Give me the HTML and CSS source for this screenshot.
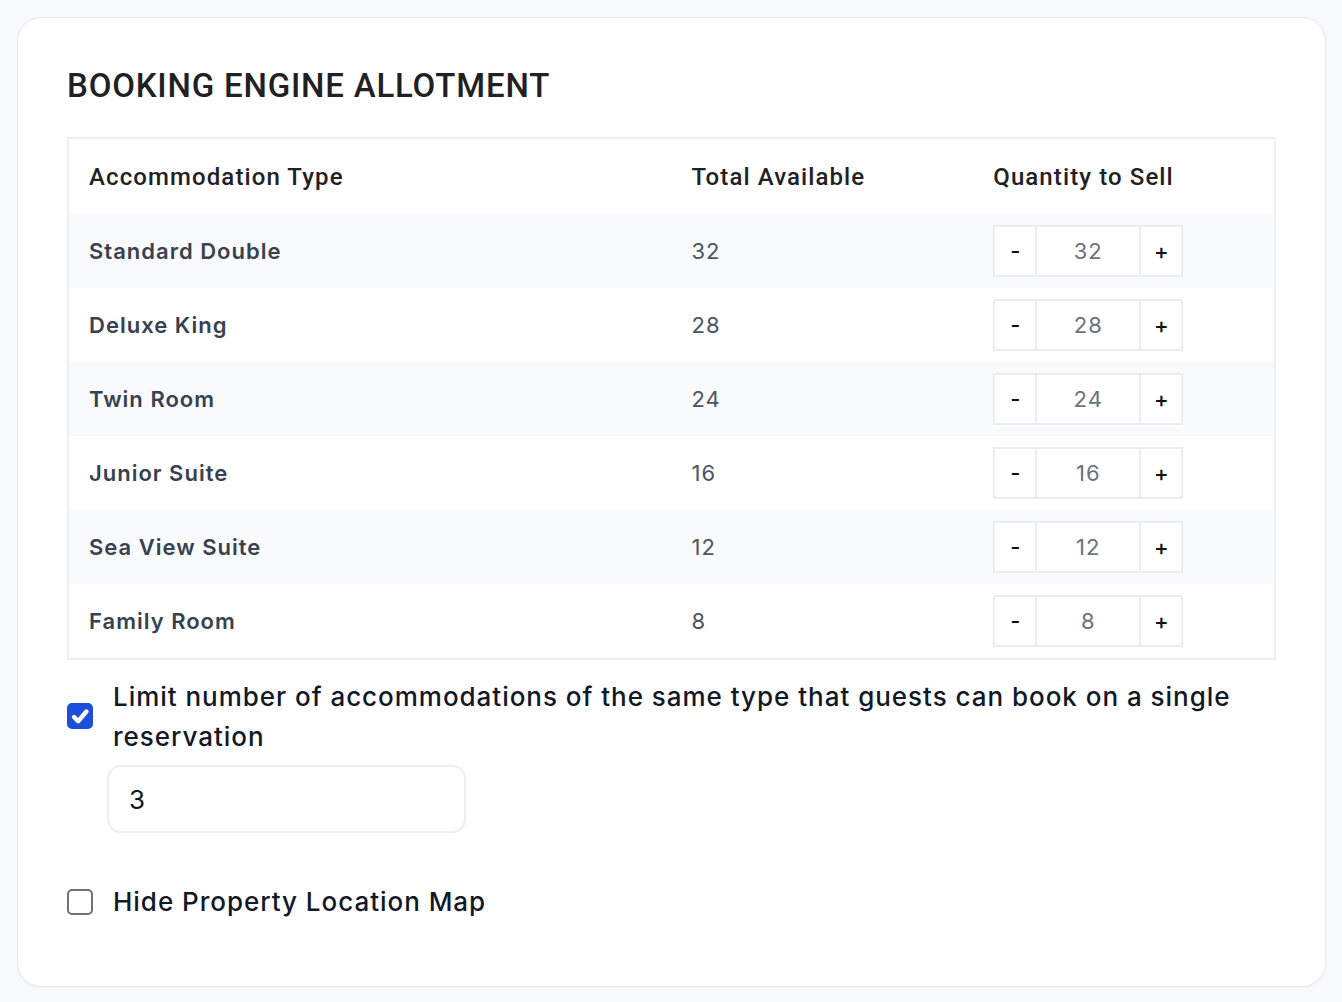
FILE: index.html
```html
<!DOCTYPE html>
<html lang="en">
<head>
  <meta charset="UTF-8">
  <title>Booking Engine Allotment</title>
  <link rel="stylesheet" href="styles.css">
</head>
<body>

<div class="card">
  <h2 class="titulo">BOOKING ENGINE ALLOTMENT</h2>

  <table class="allotment">
    <thead>
      <tr>
        <th class="col-tipo">Accommodation Type</th>
        <th class="col-total">Total Available</th>
        <th class="col-qty">Quantity to Sell</th>
      </tr>
    </thead>
    <tbody id="filas"></tbody>
  </table>

  <div class="opcion">
    <input type="checkbox" id="limitar" class="check" checked>
    <label for="limitar">Limit number of accommodations of the same type that guests can book on a single reservation</label>
  </div>
  <input type="text" class="limite" value="3">

  <div class="opcion mapa">
    <input type="checkbox" id="ocultarMapa" class="check">
    <label for="ocultarMapa">Hide Property Location Map</label>
  </div>
</div>

<script>
  const tipos = [
    { nombre: "Standard Double", total: 32 },
    { nombre: "Deluxe King", total: 28 },
    { nombre: "Twin Room", total: 24 },
    { nombre: "Junior Suite", total: 16 },
    { nombre: "Sea View Suite", total: 12 },
    { nombre: "Family Room", total: 8 }
  ];

  function mostrarFilas() {
    const tbody = document.getElementById("filas");
    tbody.innerHTML = "";
    tipos.forEach((t, i) => {
      const fila = document.createElement("tr");
      fila.innerHTML = `
        <td class="nombre">${t.nombre}</td>
        <td class="total">${t.total}</td>
        <td>
          <div class="stepper">
            <button onclick="cambiar(${i}, -1)">-</button>
            <input type="text" value="${t.total}" id="qty${i}">
            <button onclick="cambiar(${i}, 1)">+</button>
          </div>
        </td>`;
      tbody.appendChild(fila);
    });
  }

  function cambiar(i, delta) {
    const input = document.getElementById("qty" + i);
    let valor = parseInt(input.value, 10) + delta;
    if (valor < 0) valor = 0;
    if (valor > tipos[i].total) valor = tipos[i].total;
    input.value = valor;
  }

  mostrarFilas();
</script>

</body>
</html>
```

FILE: styles.css
```css
body {
  font-family: Inter, "Noto Sans", sans-serif;
  background: #f8f9fb;
  margin: 0;
  padding: 17px 16px 16px 17px;
}
.card {
  background: white;
  border: 1px solid #e8e9ec;
  border-radius: 24px;
  padding: 48px 49px 64px 49px;
  box-shadow: 0 1px 2px rgba(0,0,0,0.03);
}
.titulo {
  font-family: Roboto, Arial, sans-serif;
  font-size: 33px;
  font-weight: 500;
  color: #1f2124;
  margin: 0 0 32px 0;
  letter-spacing: 0.8px;
}
.allotment {
  width: 100%;
  border-collapse: collapse;
  border: 2px solid #eeeff1;
  text-align: left;
}
.allotment th {
  font-family: Roboto, Arial, sans-serif;
  font-size: 24px;
  font-weight: 500;
  color: #1f2124;
  height: 75px;
  padding: 0 20px;
  letter-spacing: 1.1px;
}
.col-tipo { width: 50%; }
.col-total, .col-qty { width: 25%; }
.allotment td {
  height: 74px;
  padding: 0 20px;
  font-size: 22px;
  letter-spacing: 1px;
}
.allotment tbody tr:nth-child(odd) {
  background: #f9fafb;
}
.nombre {
  font-weight: 600;
  color: #374151;
}
.total {
  color: #4b5563;
}
.stepper {
  display: flex;
  width: 190px;
  height: 52px;
}
.stepper button {
  width: 44px;
  background: white;
  border: 2px solid #ebecee;
  font-family: Inter, sans-serif;
  font-size: 22px;
  font-weight: 500;
  color: #111;
  padding: 0;
  cursor: pointer;
}
.stepper input {
  width: 102px;
  box-sizing: border-box;
  border: 2px solid #ebecee;
  border-left: none;
  border-right: none;
  background: white;
  text-align: center;
  font-family: Inter, sans-serif;
  font-size: 22px;
  letter-spacing: 1px;
  color: #6b7280;
  padding: 0;
}
.opcion {
  display: flex;
  align-items: flex-start;
  gap: 20px;
  margin-top: 17px;
}
.opcion label {
  font-size: 26px;
  font-weight: 500;
  line-height: 40px;
  letter-spacing: 0.97px;
  color: #111827;
}
.check {
  appearance: none;
  -webkit-appearance: none;
  flex: none;
  width: 26px;
  height: 26px;
  margin: 26px 0 0 0;
  border: 2px solid #6b7280;
  border-radius: 5px;
  background: white;
  box-sizing: border-box;
}
.check:checked {
  background: #1d4ed8 url("data:image/svg+xml,%3Csvg xmlns='http://www.w3.org/2000/svg' viewBox='0 0 16 16'%3E%3Cpath d='M3.8 8.6l2.8 2.8 5.6-6.6' fill='none' stroke='white' stroke-width='3' stroke-linecap='round' stroke-linejoin='round'/%3E%3C/svg%3E") center / 23px no-repeat;
  border-color: #1d4ed8;
}
.limite {
  display: block;
  margin: 8px 0 0 40px;
  width: 359px;
  height: 68px;
  box-sizing: border-box;
  border: 2px solid #eceef0;
  border-radius: 14px;
  padding: 0 20px;
  font-family: Inter, sans-serif;
  font-size: 26px;
  color: #111827;
}
.mapa {
  margin-top: 49px;
  align-items: center;
}
.mapa .check {
  margin-top: 0;
}
```
